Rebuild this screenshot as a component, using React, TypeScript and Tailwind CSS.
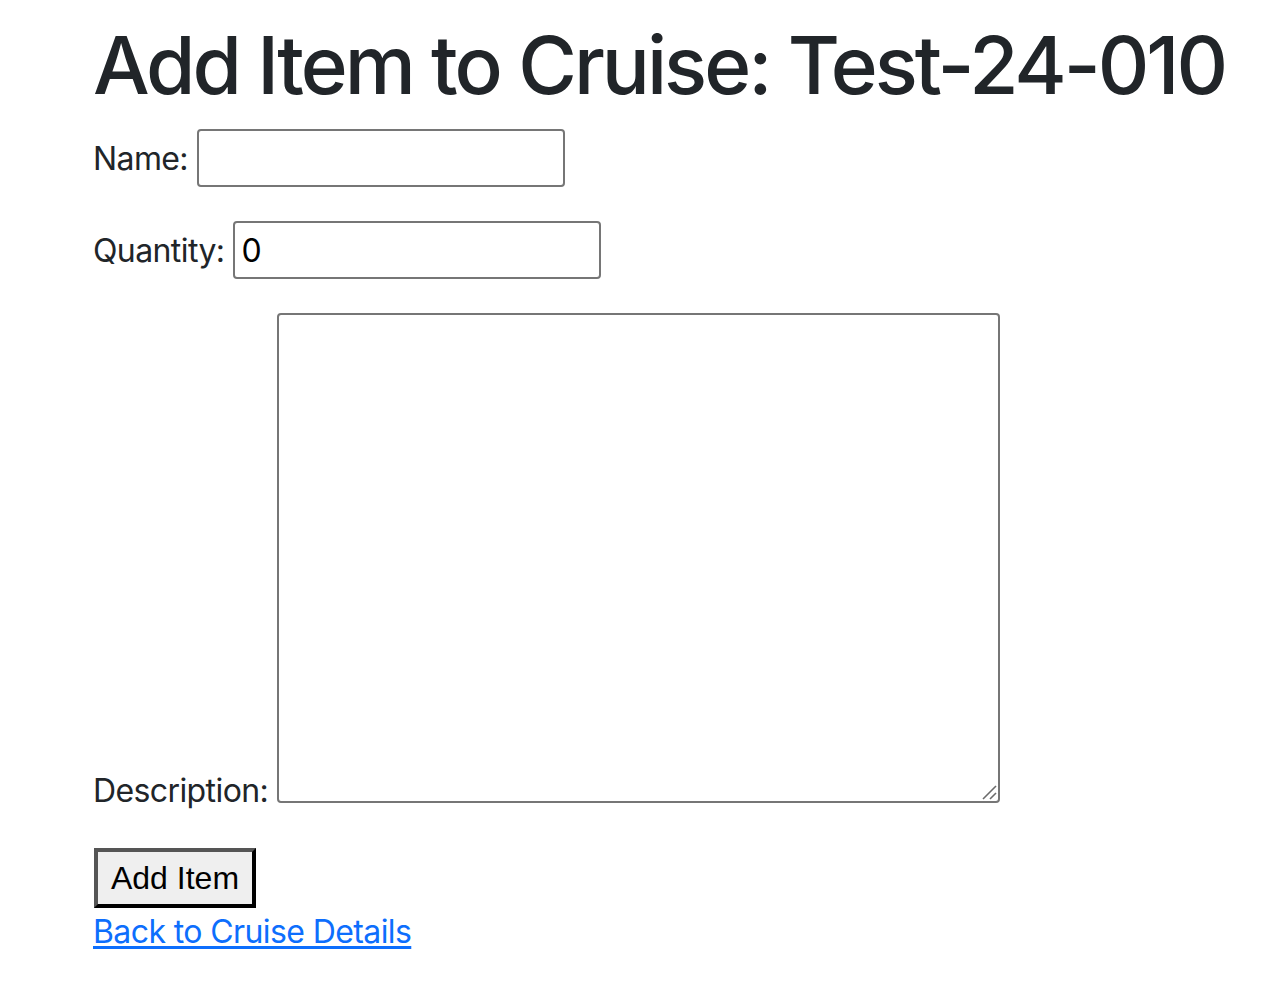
export default function App() {
  return (
    <div className="min-h-screen bg-white pl-[93px] pt-[17px] text-[#212529] font-['Inter','Noto_Sans',sans-serif]">
      <h1 className="mb-4 whitespace-nowrap text-[80px] font-medium leading-[96px] tracking-[-3px]">
        Add Item to Cruise: Test-24-010
      </h1>

      <form onSubmit={(e) => e.preventDefault()}>
        <div className="mb-[34px] flex items-baseline gap-[9px]">
          <label htmlFor="name" className="text-[32px] leading-[48px] tracking-[-0.6px]">
            Name:
          </label>
          <input
            id="name"
            type="text"
            className="h-[58px] w-[368px] rounded-[4px] border-2 border-[#767676] px-[6px] text-[32px] text-black outline-none"
          />
        </div>

        <div className="mb-[34px] flex items-baseline gap-[9px]">
          <label htmlFor="qty" className="text-[32px] leading-[48px] tracking-[-0.6px]">
            Quantity:
          </label>
          <input
            id="qty"
            type="text"
            defaultValue="0"
            className="h-[58px] w-[368px] rounded-[4px] border-2 border-[#767676] px-[6px] text-[32px] text-black outline-none"
          />
        </div>

        <div className="flex items-end gap-[9px]">
          <label htmlFor="desc" className="text-[32px] leading-[24px] tracking-[-0.6px]">
            Description:
          </label>
          <div className="relative">
            <textarea
              id="desc"
              className="block h-[490px] w-[723px] resize-none rounded-[4px] border-2 border-[#767676] p-1 text-[32px] outline-none"
            />
            <svg
              className="pointer-events-none absolute bottom-[3px] right-[3px]"
              width="16"
              height="16"
              viewBox="0 0 16 16"
            >
              <line x1="2" y1="15" x2="15" y2="2" stroke="#6b6b6b" strokeWidth="1.6" />
              <line x1="9" y1="15" x2="15" y2="9" stroke="#6b6b6b" strokeWidth="1.6" />
            </svg>
          </div>
        </div>

        <button
          type="submit"
          className="ml-px mt-[45px] block h-[60px] w-[162px] border-4 border-t-[#555] border-l-[#555] border-b-black border-r-black bg-[#efefef] text-[32px] leading-none text-black font-['Liberation_Sans',Arial,sans-serif]"
        >
          Add Item
        </button>
      </form>

      <a href="#" className="text-[32px] leading-[48px] tracking-[-0.6px] text-[#0d6efd] underline underline-offset-[3px]">
        Back to Cruise Details
      </a>
    </div>
  );
}
